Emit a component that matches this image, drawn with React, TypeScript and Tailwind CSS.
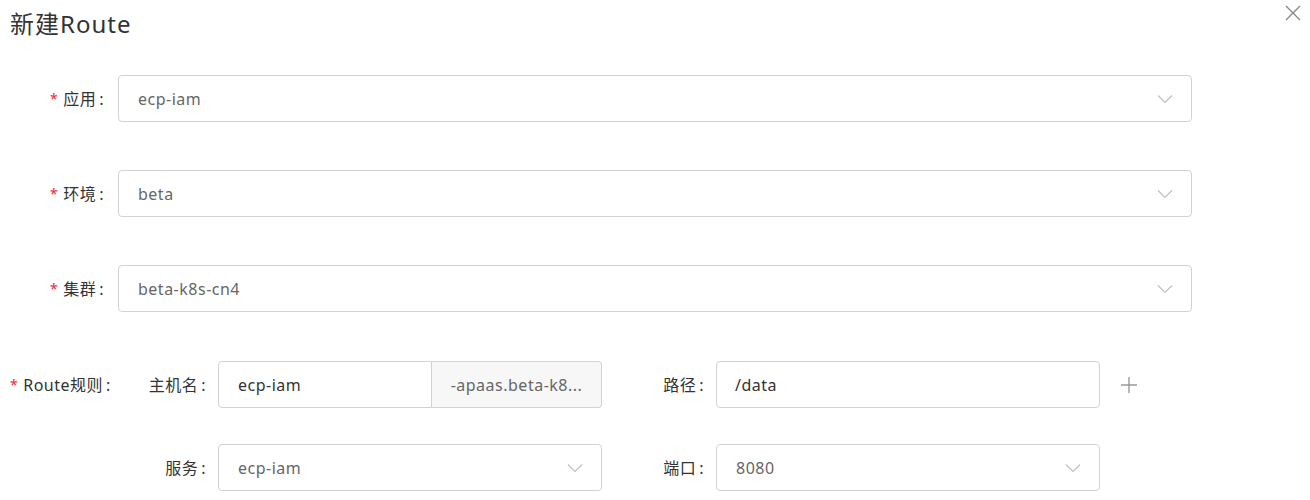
import React from "react";

const font = { fontFamily: '"Noto Sans", "Noto Sans CJK SC", sans-serif' };

const Chevron = () => (
  <svg width="16" height="10" viewBox="0 0 16 10" fill="none">
    <path d="M1 1.5 L8 8.5 L15 1.5" stroke="#c0c0c0" strokeWidth="1.2" />
  </svg>
);

const Label = ({ text, required }: { text: string; required?: boolean }) => (
  <div className="w-[118px] shrink-0 flex items-center justify-end text-[16px] text-[#333]">
    {required && <span className="text-[#f5222d] mr-[5px] text-[14px]">*</span>}
    <span>{text}</span>
    <span className="ml-[3px] mr-[14px]">:</span>
  </div>
);

const Select = ({ value, className }: { value: string; className: string }) => (
  <div
    className={`h-[47px] border border-[#d2d2d2] rounded-[4px] bg-white flex items-center justify-between pl-[19px] pr-[18px] text-[16px] text-[#666] ${className}`}
  >
    <span>{value}</span>
    <Chevron />
  </div>
);

const SubLabel = ({ text, className }: { text: string; className: string }) => (
  <div className={`shrink-0 flex items-center justify-end text-[16px] text-[#333] ${className}`}>
    <span>{text}</span>
    <span className="ml-[3px] mr-[12px]">:</span>
  </div>
);

export default function App() {
  const rows = [
    { label: "应用", value: "ecp-iam" },
    { label: "环境", value: "beta" },
    { label: "集群", value: "beta-k8s-cn4" },
  ];
  return (
    <div className="relative w-[1310px] h-[500px] bg-white overflow-hidden tracking-[0.5px]" style={font}>
      <button className="absolute right-[8px] top-[4px] w-[18px] h-[18px] flex items-center justify-center">
        <svg width="16" height="16" viewBox="0 0 16 16">
          <path d="M1 1 L15 15 M15 1 L1 15" stroke="#888" strokeWidth="1.4" />
        </svg>
      </button>
      <div className="pl-[10px] pt-[6px] text-[24px] leading-[36px] text-[#333] tracking-[1px]">新建Route</div>

      <div className="flex flex-col gap-[48px] mt-[33px]">
        {rows.map((r) => (
          <div key={r.label} className="flex items-center">
            <Label text={r.label} required />
            <Select value={r.value} className="w-[1074px]" />
          </div>
        ))}
      </div>

      <div className="flex flex-col gap-[36px] mt-[49px]">
        <div className="flex items-center">
          <div className="w-[136px] shrink-0 pl-[10px] flex items-center text-[16px] text-[#333]">
            <span className="text-[#f5222d] mr-[5px] text-[14px]">*</span>
            <span>Route规则</span>
            <span className="ml-[3px]">:</span>
          </div>
          <SubLabel text="主机名" className="w-[82px]" />
          <div className="flex h-[47px] w-[384px]">
            <div className="w-[214px] border border-[#d2d2d2] rounded-l-[4px] flex items-center pl-[19px] text-[16px] text-[#333]">
              ecp-iam
            </div>
            <div className="flex-1 border border-l-0 border-[#d2d2d2] rounded-r-[4px] bg-[#f7f7f7] flex items-center justify-center text-[16px] text-[#666]">
              -apaas.beta-k8...
            </div>
          </div>
          <SubLabel text="路径" className="w-[114px]" />
          <div className="w-[384px] h-[47px] border border-[#d2d2d2] rounded-[4px] flex items-center pl-[18px] text-[16px] text-[#333]">
            /data
          </div>
          <div className="ml-[20px] w-[18px] h-[18px] flex items-center justify-center">
            <svg width="18" height="18" viewBox="0 0 18 18">
              <path d="M9 1 V17 M1 9 H17" stroke="#999" strokeWidth="1.4" />
            </svg>
          </div>
        </div>

        <div className="flex items-center">
          <div className="w-[136px] shrink-0" />
          <SubLabel text="服务" className="w-[82px]" />
          <Select value="ecp-iam" className="w-[384px]" />
          <SubLabel text="端口" className="w-[114px]" />
          <Select value="8080" className="w-[384px]" />
        </div>
      </div>
    </div>
  );
}
